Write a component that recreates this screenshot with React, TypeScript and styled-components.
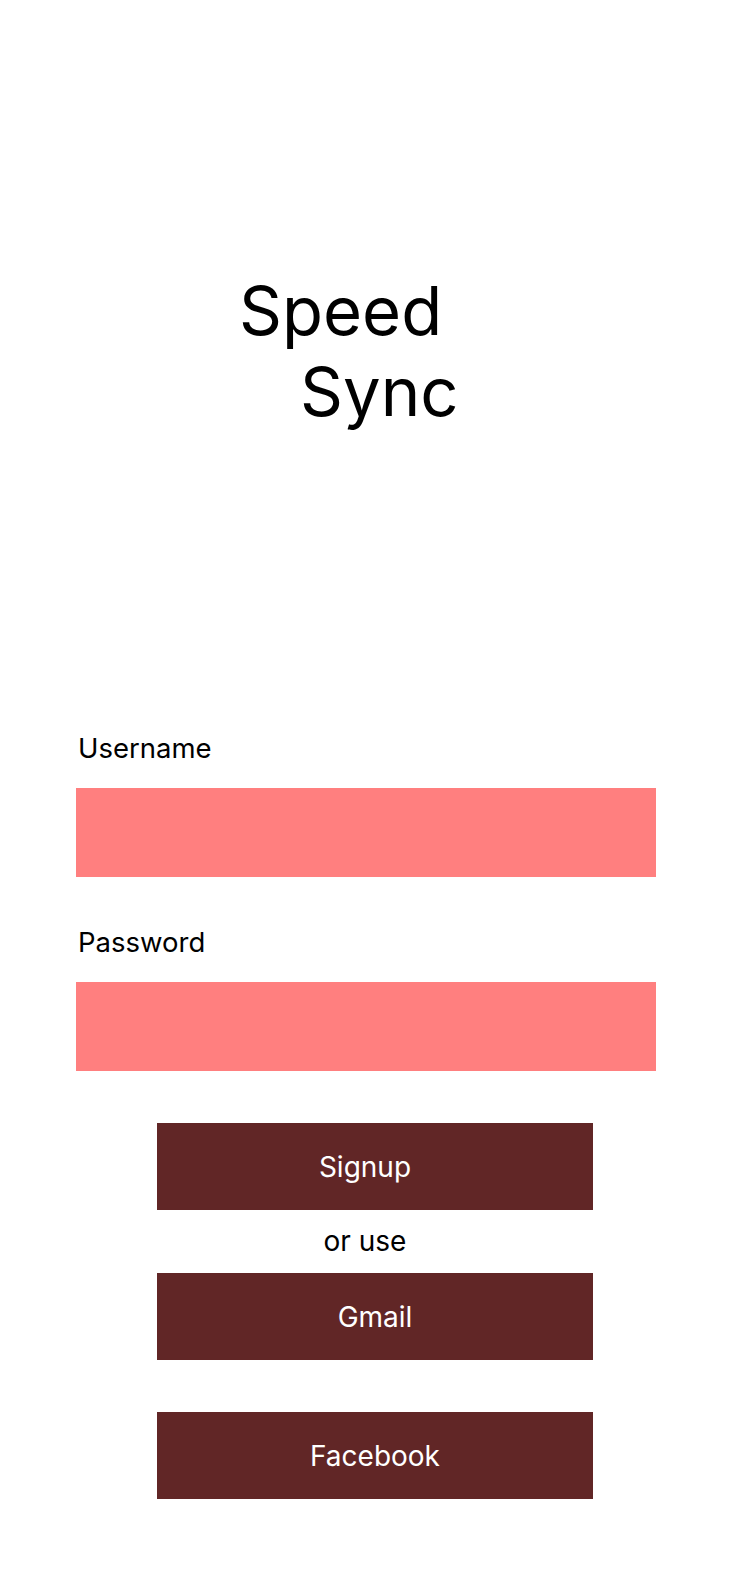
import styled, { createGlobalStyle } from 'styled-components';

const GlobalStyle = createGlobalStyle`
	html, body {
		margin: 0;
		padding: 0;
		background: #ffffff;
	}

	body {
		font-family: Inter, 'Noto Sans', sans-serif;
		color: #000000;
	}
`;

export default function App() {
	return (
		<>
			<GlobalStyle />
			<Page>
				<Title>
					<TitleLine>Speed</TitleLine>
					<TitleLine $indent={61}>Sync</TitleLine>
				</Title>

				<Form>
					<Field>
						<Label>Username</Label>
						<Input type="text" />
					</Field>
					<Field>
						<Label>Password</Label>
						<Input type="password" />
					</Field>

					<Actions>
						<ActionButton $offset={20}>Signup</ActionButton>
						<OrText>or use</OrText>
						<ActionButton>Gmail</ActionButton>
						<ActionButton $gapTop={52}>Facebook</ActionButton>
					</Actions>
				</Form>
			</Page>
		</>
	);
}

const Page = styled.div`
	width: 731px;
	min-height: 1592px;
	display: flex;
	flex-direction: column;
`;

const Title = styled.h1`
	margin: 0;
	padding: 270px 0 0 239px;
	display: flex;
	flex-direction: column;
	font-size: 67px;
	font-weight: 400;
	line-height: 81px;
`;

const TitleLine = styled.span<{ $indent?: number }>`
	padding-left: ${(p) => p.$indent ?? 0}px;
`;

const Form = styled.div`
	margin-top: 299px;
	display: flex;
	flex-direction: column;
	gap: 48px;
`;

const Field = styled.div`
	display: flex;
	flex-direction: column;
	gap: 23px;
	padding-left: 76px;
`;

const Label = styled.label`
	font-size: 27.5px;
	line-height: 34px;
	padding-left: 2px;
`;

const Input = styled.input`
	width: 580px;
	height: 89px;
	box-sizing: border-box;
	border: none;
	outline: none;
	background: #ff7f7f;
	margin: 0;
	padding: 0 16px;
	font-family: inherit;
	font-size: 24px;
`;

const Actions = styled.div`
	display: flex;
	flex-direction: column;
	align-items: flex-start;
	padding-left: 157px;
	margin-top: 4px;
`;

const ActionButton = styled.button<{ $offset?: number; $gapTop?: number }>`
	width: 436px;
	height: 87px;
	margin: ${(p) => p.$gapTop ?? 0}px 0 0;
	border: none;
	background: #612626;
	color: #ffffff;
	font-family: Inter, 'Noto Sans', sans-serif;
	font-size: 28px;
	padding: 0 ${(p) => p.$offset ?? 0}px 0 0;
	cursor: pointer;
`;

const OrText = styled.div`
	width: 416px;
	text-align: center;
	font-size: 28px;
	line-height: 63px;
`;
